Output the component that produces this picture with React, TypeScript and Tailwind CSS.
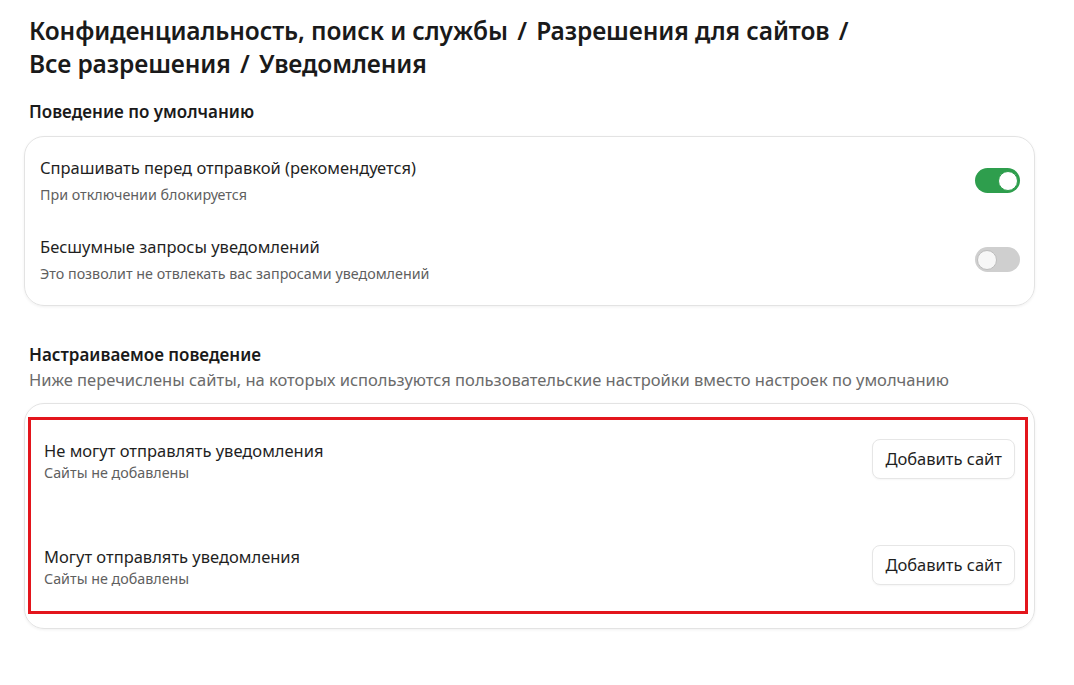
import { useState } from "react";

type ToggleRow = {
  title: string;
  hint: string;
  on: boolean;
};

type SiteList = {
  title: string;
  hint: string;
};

function Toggle({ on, onClick }: { on: boolean; onClick: () => void }) {
  return (
    <button
      onClick={onClick}
      className={`w-[45px] h-[25px] rounded-full flex items-center px-[2px] shrink-0 ${
        on ? "bg-[#2e9e4d] justify-end" : "bg-[#cfcfcf] justify-start"
      }`}
    >
      <span
        className={`w-[20px] h-[20px] rounded-full ${
          on ? "bg-white border border-[#2e9e4d]" : "border border-[#bdbdbd] bg-[#f7f7f7]"
        }`}
      />
    </button>
  );
}

// breadcrumb separator, a bit more air than a plain space
const Sep = () => <span className="mx-[3px]">/</span>;

export default function App() {
  const [rows, setRows] = useState<ToggleRow[]>([
    {
      title: "Спрашивать перед отправкой (рекомендуется)",
      hint: "При отключении блокируется",
      on: true,
    },
    {
      title: "Бесшумные запросы уведомлений",
      hint: "Это позволит не отвлекать вас запросами уведомлений",
      on: false,
    },
  ]);

  const lists: SiteList[] = [
    { title: "Не могут отправлять уведомления", hint: "Сайты не добавлены" },
    { title: "Могут отправлять уведомления", hint: "Сайты не добавлены" },
  ];

  const flip = (i: number) =>
    setRows((prev) => prev.map((r, idx) => (idx === i ? { ...r, on: !r.on } : r)));

  return (
    <main
      className="w-[1074px] h-[685px] bg-white text-[#1a1a1a] pl-[24px] pr-[39px] pt-[14px]"
      style={{ fontFamily: '"Noto Sans", "Open Sans", sans-serif' }}
    >
      <h1 className="pl-[5px] text-[24.5px] leading-[33px] font-semibold tracking-[-0.1px]">
        Конфиденциальность, поиск и службы <Sep /> Разрешения для сайтов <Sep />
        <br />
        Все разрешения <Sep /> Уведомления
      </h1>

      <h2 className="pl-[5px] mt-[20px] text-[17px] leading-[24px] font-semibold">
        Поведение по умолчанию
      </h2>

      <section className="mt-[12px] rounded-[20px] border border-[#e3e3e3] shadow-[0_1px_3px_rgba(0,0,0,0.06)] pl-[15px] pr-[14px] pt-[19px] pb-[21px] flex flex-col gap-[30px]">
        {rows.map((row, i) => (
          <div key={i} className="flex items-center justify-between">
            <div className="flex flex-col">
              <p className="text-[16.5px] leading-[24px] text-[#1f1f1f]">{row.title}</p>
              <p className="mt-[5px] text-[14.3px] leading-[20px] text-[#5f5f5f]">{row.hint}</p>
            </div>
            <Toggle on={row.on} onClick={() => flip(i)} />
          </div>
        ))}
      </section>

      <h2 className="pl-[5px] mt-[37px] text-[17px] leading-[24px] font-semibold">
        Настраиваемое поведение
      </h2>
      <p className="pl-[5px] mt-[1px] text-[16.5px] leading-[24px] text-[#6b6b6b]">
        Ниже перечислены сайты, на которых используются пользовательские настройки вместо настроек по умолчанию
      </p>

      <section className="mt-[11px] rounded-[20px] border border-[#e3e3e3] shadow-[0_1px_3px_rgba(0,0,0,0.06)] pl-[3px] pr-[6px] pt-[13px] pb-[14px]">
        <div className="border-[3px] border-[#e3151c] pl-[13px] pr-[10px] pt-[19px] pb-[22px] flex flex-col gap-[62px]">
          {lists.map((item, i) => (
            <div key={i} className="flex items-center justify-between">
              <div className="flex flex-col">
                <p className="text-[16.5px] leading-[24px] text-[#1f1f1f]">{item.title}</p>
                <p className="text-[14.3px] leading-[20px] text-[#5f5f5f]">{item.hint}</p>
              </div>
              <button className="h-[40px] px-[12px] mb-[4px] rounded-[8px] border border-[#e6e6e6] bg-white text-[16.5px] text-[#1f1f1f] shadow-[0_1px_2px_rgba(0,0,0,0.04)]">
                Добавить сайт
              </button>
            </div>
          ))}
        </div>
      </section>
    </main>
  );
}
